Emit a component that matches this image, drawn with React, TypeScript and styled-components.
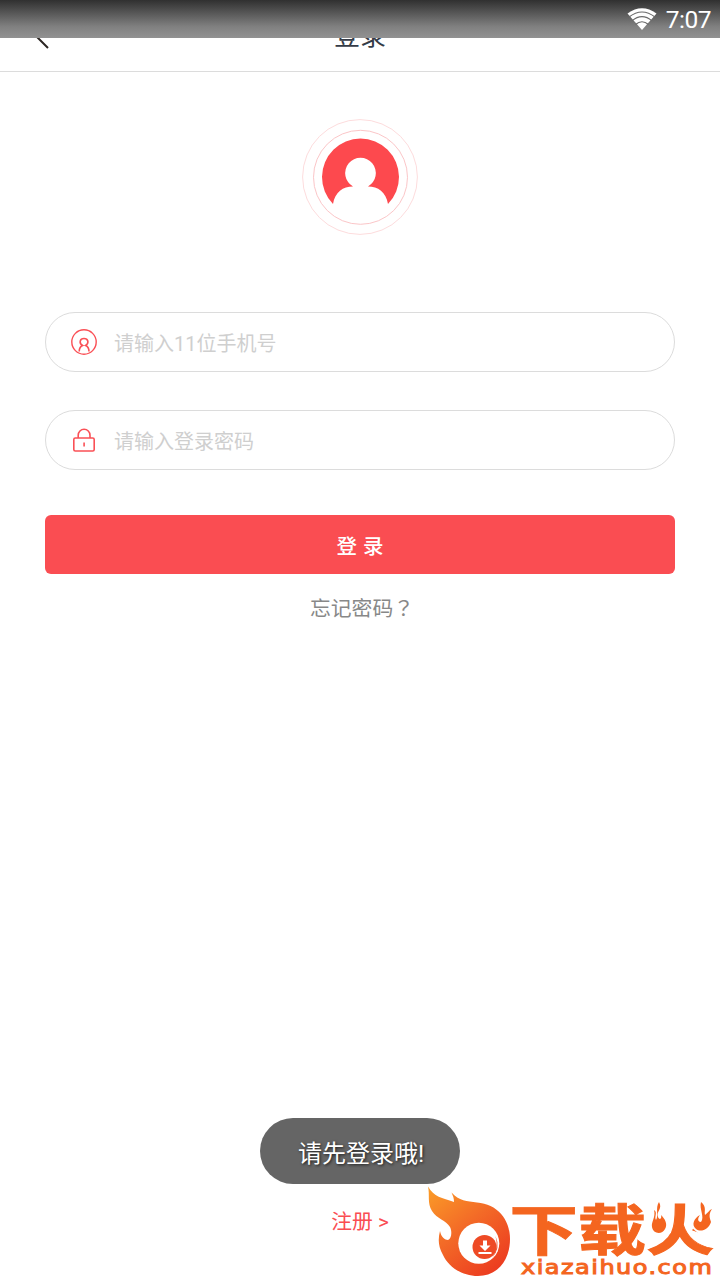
import React from "react";
import styled, { createGlobalStyle } from "styled-components";

const GlobalStyle = createGlobalStyle`
  * { box-sizing: border-box; }
  body { margin: 0; background: #fff; }
`;

const Screen = styled.div`
  position: relative;
  display: flex;
  flex-direction: column;
  width: 720px;
  height: 1280px;
  overflow: hidden;
  background: #fff;
  font-family: Roboto, "Noto Sans CJK SC", sans-serif;
`;

const StatusBar = styled.div`
  position: absolute;
  inset: 0 0 auto 0;
  height: 38px;
  padding: 0 9px 0 0;
  display: flex;
  align-items: center;
  justify-content: flex-end;
  gap: 9px;
  color: #fff;
  font-size: 24.5px;
  letter-spacing: -0.5px;
  background: linear-gradient(#303030, #808080 70%, #929292);
`;

const Header = styled.header`
  flex: none;
  display: grid;
  grid-template-columns: 72px 1fr 72px;
  align-items: center;
  height: 72px;
  border-bottom: 1px solid #dcdcdc;
`;

const BackButton = styled.button`
  display: flex;
  padding: 0 0 0 27px;
  border: 0;
  background: none;
`;

const Title = styled.h1`
  margin: 0;
  text-align: center;
  color: #343b47;
  font-size: 26px;
  font-weight: 400;
  line-height: 36px;
`;

const Main = styled.main`
  flex: 1;
  display: flex;
  flex-direction: column;
  align-items: center;
  padding: 47px 45px 0;
`;

const Avatar = styled.svg`
  display: block;
  margin-bottom: 77px;
`;

const Field = styled.label<{ $gap: number }>`
  display: flex;
  align-items: center;
  gap: 16px;
  width: 100%;
  height: 60px;
  padding-left: 25px;
  margin-bottom: ${(p) => p.$gap}px;
  border: 1px solid #dcdcdc;
  border-radius: 30px;
`;

const Placeholder = styled.span`
  color: #cfcfcf;
  font-size: 20px;
  line-height: 30px;
  padding-top: 4px;
`;

const LoginButton = styled.button`
  width: 100%;
  height: 59px;
  padding: 0;
  border: 0;
  border-radius: 6px;
  background: #fa4d52;
  color: #fff;
  font: 500 20.5px Roboto, "Noto Sans CJK SC", sans-serif;
  word-spacing: 1px;
`;

const Forgot = styled.a`
  margin-top: 17px;
  padding-left: 4px;
  color: #888;
  font-size: 20.8px;
  line-height: 32px;
`;

const QuestionMark = styled.span`
  font-family: "Noto Sans CJK TC", sans-serif;
`;

const Register = styled.a`
  margin: auto 0 42px;
  color: #fa4d52;
  font-size: 20.8px;
  line-height: 32px;
`;

const Toast = styled.div`
  position: absolute;
  left: 260px;
  top: 1118px;
  width: 200px;
  height: 66px;
  border-radius: 33px;
  padding-left: 2px;
  display: flex;
  align-items: center;
  justify-content: center;
  background: #656565;
  color: #fff;
  font-size: 24px;
  text-shadow: 1px 1px 3px rgba(0, 0, 0, 0.75);
`;

const Logo = styled.svg`
  position: absolute;
  right: 0;
  bottom: 0;
`;

const WifiIcon = () => (
  <svg width="30" height="23" viewBox="0 0 30 23">
    <path d="M.5 5.500Q15-5 29.500 5.500L15 22Z" fill="#fff" />
    <g fill="none" stroke="#6a6a6a" strokeWidth="1.100">
      <path d="M2 9Q15-1 28 9" />
      <path d="M5 12.800Q15 4.500 25 12.800" />
      <path d="M8.500 16.500Q15 11 21.500 16.500" />
    </g>
  </svg>
);

const AvatarIcon = () => (
  <Avatar width="116" height="116" viewBox="0 0 116 116">
    <circle cx="58" cy="58" r="57.400" fill="none" stroke="#fddcdd" />
    <circle cx="58.500" cy="58.300" r="47" fill="none" stroke="#fbc6c8" />
    <path d="M31 85A38.500 38.500 0 1 1 86 85C84 73 76 67.500 66 67.500A15.300 15.300 0 1 0 51 67.500C41 67.500 33 73 31 85Z" fill="#fd494e" />
  </Avatar>
);

const UserIcon = () => (
  <svg width="27" height="27" viewBox="0 0 27 27" fill="none" stroke="#fa5056" strokeWidth="1.400">
    <circle cx="13" cy="13" r="12.200" />
    <path d="M8.200 22.500C8.200 19 9 17.600 11.600 16.500C7.600 14 8.800 9.500 13 9.500S18.400 14 14.600 16.500C17 17.600 18 19 18 22.500" strokeWidth="1.600" />
  </svg>
);

const LockIcon = () => (
  <svg width="27" height="27" viewBox="0 0 27 27" fill="none" stroke="#fa5056" strokeWidth="1.600">
    <rect x="2.800" y="11" width="20.400" height="13" rx="1.500" />
    <path d="M7.200 11V8.200A5.900 5.900 0 0 1 19 8.200V11M13.100 15.500V19.500" />
  </svg>
);

const BrandLogo = () => (
  <Logo width="300" height="100" viewBox="0 0 300 100">
    <defs>
      <linearGradient id="flame" x1="0" y1="0" x2=".75" y2="1">
        <stop offset="0" stopColor="#fb9d27" />
        <stop offset=".5" stopColor="#f36a27" />
        <stop offset="1" stopColor="#ec3c20" />
      </linearGradient>
    </defs>
    <path d="M8 6.500C14 17 22 18 34 22C34 18 33 16 31.500 12.500C39 21 47 21 57 22.500C77 24 90 39 90 59C90 81 77 96 58 96C41 96 28 86 23 75C18 66 18 59 20 51C21 57 25 60 28 60C32 58 32 51 30 47C26 40 17 39 12 31C7 23 10 15 8 6.500Z" fill="url(#flame)" />
    <circle cx="58.800" cy="63.300" r="20.500" fill="#fff" />
    <circle cx="64.500" cy="67" r="12" fill="#ee4a25" />
    <path d="M75.500 56Q81 68 72 78Q79 68 75.500 56Z" fill="#ee4a25" />
    <path d="M63 60.500h4v5h3.500L65 71L59.500 65.500H63ZM58.500 72h13v2h-13Z" fill="#fff" />
    <g fill="#f4651f">
      <text transform="translate(89.500 70) scale(1.220 .98)" fontFamily='"Noto Sans CJK SC", sans-serif' fontWeight="700" fontSize="56" stroke="#f4651f" strokeWidth="1">下载火</text>
      <path d="M224 20H251V53L240 56H224ZM274 20H298V54H279L270 46Z" fill="#fff" />
      <path d="M239 22C243 29 236 31 238 37C240 41 242 38 241 35C245 39 248 44 245 49C242 55 233 54 232 47C231 42 236 37 234 30C238 32 234 37 236 40C239 36 235 28 239 22Z" />
      <path d="M281 22C287 27 284 31 285 35C288 33 289 30 292 29C288 35 290 38 291 42C289 49 281 53 276 49C271 45 274 38 280 35C277 39 278 42 281 42C285 37 279 29 281 22Z" />
      <text transform="translate(101 93.500) scale(1.200 1)" fontFamily='"DejaVu Sans", sans-serif' fontSize="20" textLength="159" lengthAdjust="spacing" stroke="#f4651f" strokeWidth="1">xiazaihuo.com</text>
    </g>
  </Logo>
);

export default function App() {
  return (
    <Screen>
      <GlobalStyle />
      <Header>
        <BackButton aria-label="返回">
          <svg width="24" height="26" viewBox="0 0 24 26" fill="none" stroke="#2c2623" strokeWidth="2">
            <path d="M21 1L9 13L21 25" />
          </svg>
        </BackButton>
        <Title>登录</Title>
      </Header>
      <Main>
        <AvatarIcon />
        <Field $gap={38}>
          <UserIcon />
          <Placeholder>请输入11位手机号</Placeholder>
        </Field>
        <Field $gap={45}>
          <LockIcon />
          <Placeholder>请输入登录密码</Placeholder>
        </Field>
        <LoginButton>登 录</LoginButton>
        <Forgot>忘记密码<QuestionMark lang="zh-TW">？</QuestionMark></Forgot>
        <Register>注册 &gt;</Register>
      </Main>
      <StatusBar>
        <WifiIcon />
        <span>7:07</span>
      </StatusBar>
      <Toast>请先登录哦!</Toast>
      <BrandLogo />
    </Screen>
  );
}
